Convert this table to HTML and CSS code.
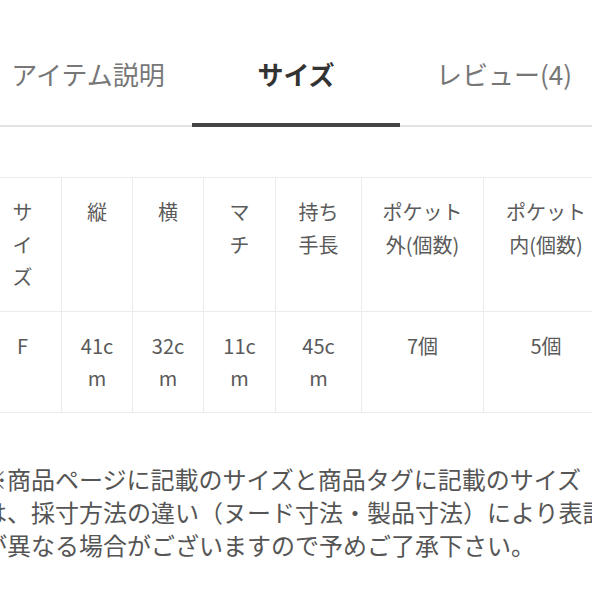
FILE: index.html
```html
<!DOCTYPE html>
<html lang="ja">
<head>
<meta charset="utf-8">
<link rel="stylesheet" href="styles.css">
</head>
<body>
<div class="page">
  <nav class="tabs">
    <div class="tab">アイテム説明</div>
    <div class="tab active">サイズ</div>
    <div class="tab">レビュー(4)</div>
  </nav>
  <table class="size-table">
    <colgroup>
      <col class="w1"><col class="w2"><col class="w3"><col class="w4"><col class="w5"><col class="w6"><col class="w7">
    </colgroup>
    <thead>
      <tr>
        <th class="first">サイズ</th>
        <th>縦</th>
        <th>横</th>
        <th>マチ</th>
        <th>持ち手長</th>
        <th>ポケット外(個数)</th>
        <th>ポケット内(個数)</th>
      </tr>
    </thead>
    <tbody>
      <tr>
        <td class="first">F</td>
        <td>41cm</td>
        <td>32cm</td>
        <td>11cm</td>
        <td>45cm</td>
        <td>7個</td>
        <td>5個</td>
      </tr>
    </tbody>
  </table>
  <p class="note">※商品ページに記載のサイズと商品タグに記載のサイズは、採寸方法の違い（ヌード寸法・製品寸法）により表記が異なる場合がございますので予めご了承下さい。</p>
</div>
</body>
</html>
```
FILE: styles.css
```css
html, body {
  margin: 0;
  padding: 0;
  background: #ffffff;
  overflow: hidden;
}
body {
  font-family: "Noto Sans CJK JP", "Noto Sans", sans-serif;
  color: #555;
}
.page {
  width: 592px;
  height: 592px;
  overflow: hidden;
}
.tabs {
  display: flex;
  border-bottom: 2px solid #e2e2e2;
}
.tab {
  flex: 0 0 208px;
  text-align: center;
  font-size: 26px;
  line-height: 36px;
  padding: 56px 0 31px;
  color: #777;
  border-bottom: 4px solid transparent;
  margin-bottom: -2px;
}
.tab:first-child {
  margin-left: -16px;
}
.tab.active {
  color: #333;
  font-weight: 700;
  border-bottom-color: #444;
}
.size-table {
  margin-top: 50px;
  margin-left: -17px;
  width: 625px;
  border-collapse: collapse;
  table-layout: fixed;
}
.w1 { width: 78px; }
.w2 { width: 71px; }
.w3 { width: 71px; }
.w4 { width: 72px; }
.w5 { width: 86px; }
.w6 { width: 122px; }
.w7 { width: 125px; }
.size-table th,
.size-table td {
  border: 1px solid #ebebeb;
  padding: 18px 18px 17px;
  font-size: 20px;
  line-height: 32.5px;
  font-weight: 400;
  color: #5a5a5a;
  text-align: center;
  vertical-align: top;
  word-break: break-all;
}
.size-table th.first,
.size-table td.first {
  padding-left: 20px;
  padding-right: 20px;
}
.note {
  margin: 49px 0 0 -17px;
  width: 624px;
  font-size: 24px;
  line-height: 33px;
  color: #555;
}
```
